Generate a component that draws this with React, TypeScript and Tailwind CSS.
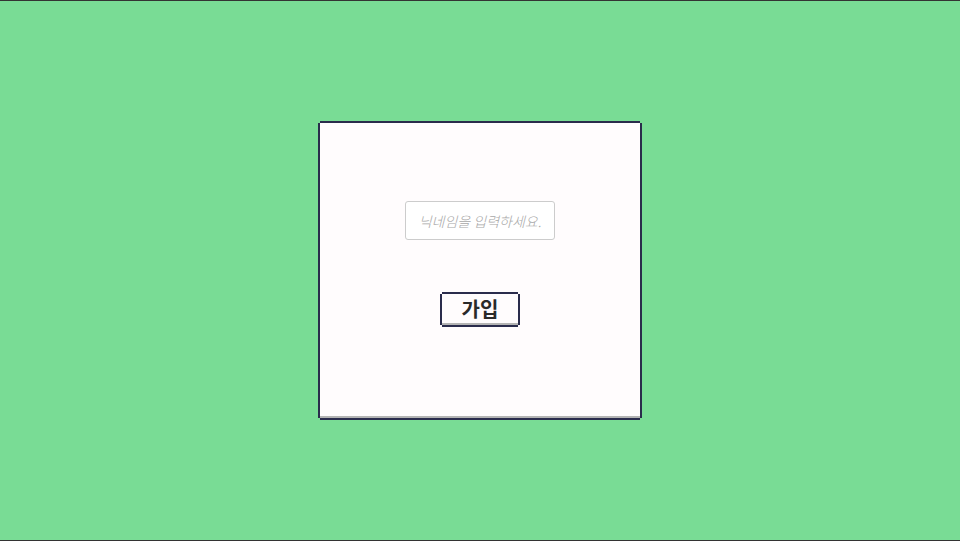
import { useState } from 'react';

// pixel-style border: offset shadows leave the corners notched
const PIXEL_BOX =
  'shadow-[-2px_0_0_#2a2c4c,2px_0_0_#2a2c4c,0_-2px_0_#2a2c4c,0_2px_0_#2a2c4c,inset_0_-2px_0_#b4b4b4]';

export default function App() {
  const [nickname, setNickname] = useState('');

  return (
    <div
      className="flex h-[541px] w-full items-center justify-center border-y border-[#333333] bg-[#79dc95]"
      style={{ fontFamily: '"Noto Sans CJK KR", "Noto Sans", sans-serif' }}
    >
      <div className={`flex h-[295px] w-[320px] flex-col items-center bg-[#fffcfd] pt-[78px] ${PIXEL_BOX}`}>
        <input
          value={nickname}
          onChange={(e) => setNickname(e.target.value)}
          placeholder="닉네임을 입력하세요."
          className="h-[39px] w-[150px] rounded-[3px] border border-[#cccccc] bg-white text-center text-[14px] font-light italic text-[#333] outline-none placeholder:text-[#a8a8a8]"
        />
        <button
          className={`mt-[54px] flex h-[31px] w-[76px] items-center justify-center bg-[#fffcfd] pb-[2px] text-[20px] font-bold text-[#2a2a2a] ${PIXEL_BOX}`}
        >
          가입
        </button>
      </div>
    </div>
  );
}
